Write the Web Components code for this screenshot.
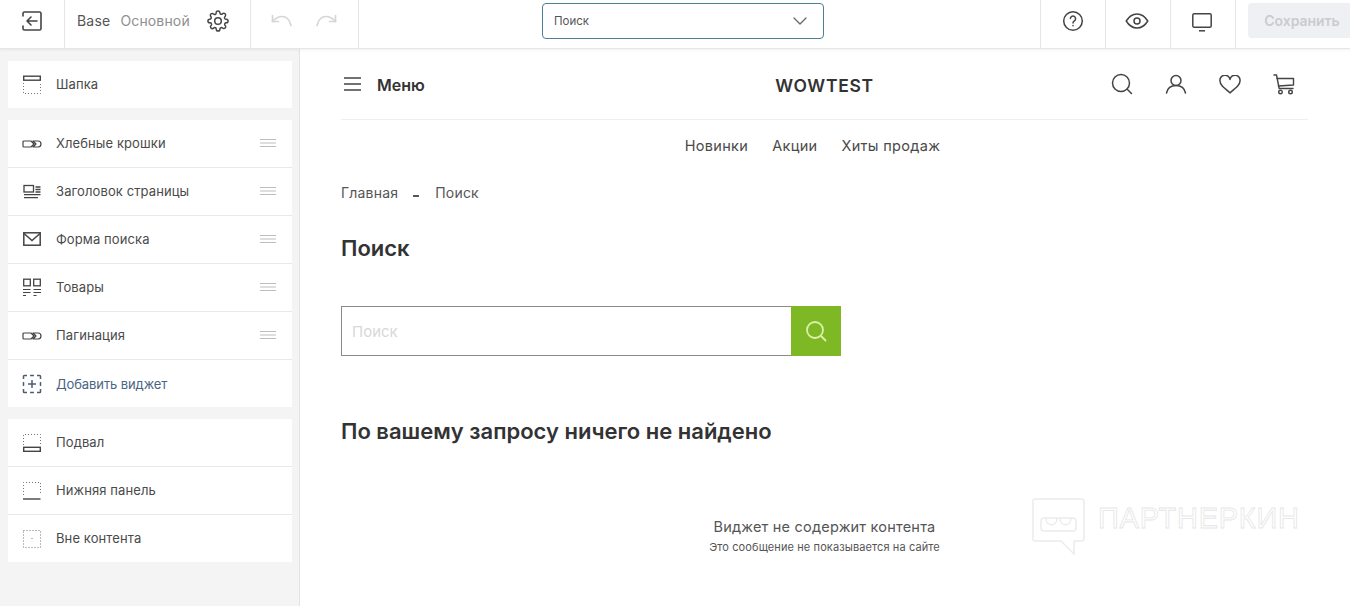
<!DOCTYPE html>
<html lang="ru"><head><meta charset="utf-8"><title>Редактор</title>
<style>
html,body{margin:0;height:606px;overflow:hidden;background:#fff;font-family:Inter,"Noto Sans",sans-serif;color:#333}
</style></head><body>
<editor-app></editor-app>
<script>
const I={
back:'<svg width="22" height="22" viewBox="0 0 22 22" fill="none" stroke="#444" stroke-width="1.6" stroke-linecap="round" stroke-linejoin="round"><path d="M2 6V3.5A1.5 1.5 0 0 1 3.5 2h15A1.5 1.5 0 0 1 20 3.5v15a1.500 1.500 0 0 1-1.500 1.500h-15A1.500 1.500 0 0 1 2 18.500V16"/><path d="M16 11H6M10 7l-4 4 4 4"/></svg>',
gear:'<svg width="22" height="22" viewBox="0 0 24 24" fill="none" stroke="#444" stroke-width="1.6" stroke-linejoin="round"><circle cx="12" cy="12" r="3.6"/><path d="M19.4 15a1.650 1.650 0 0 0 .33 1.820l.06.06a2 2 0 1 1-2.830 2.830l-.06-.06a1.650 1.650 0 0 0-2.800 1.170V21a2 2 0 1 1-4 0v-.09A1.650 1.650 0 0 0 7.300 19.700l-.06.06a2 2 0 1 1-2.830-2.830l.06-.06A1.650 1.650 0 0 0 3.300 14H3a2 2 0 1 1 0-4h.09A1.650 1.650 0 0 0 4.300 7.300l-.06-.06a2 2 0 1 1 2.830-2.830l.06.06A1.650 1.650 0 0 0 10 3.300V3a2 2 0 1 1 4 0v.09a1.650 1.650 0 0 0 2.800 1.170l.06-.06a2 2 0 1 1 2.830 2.830l-.06.06A1.650 1.650 0 0 0 20.700 10H21a2 2 0 1 1 0 4h-.09a1.650 1.650 0 0 0-1.510 1z"/></svg>',
undo:'<svg width="22" height="14" viewBox="0 0 22 14" fill="none" stroke="#d6d6d6" stroke-width="1.700" stroke-linecap="round" stroke-linejoin="round"><path d="M1.500 1.500v6h6"/><path d="M1.500 7.500C5 3.500 8 2.500 11 2.500c4 0 7.500 3 9 9"/></svg>',
redo:'<svg width="22" height="14" viewBox="0 0 22 14" fill="none" stroke="#d6d6d6" stroke-width="1.700" stroke-linecap="round" stroke-linejoin="round"><path d="M20.500 1.500v6h-6"/><path d="M20.500 7.500C17 3.500 14 2.500 11 2.500c-4 0-7.500 3-9 9"/></svg>',
chev:'<svg width="14" height="8" viewBox="0 0 14 8" fill="none" stroke="#666" stroke-width="1.300" stroke-linecap="round" stroke-linejoin="round"><path d="M1 1l6 6 6-6"/></svg>',
help:'<svg width="22" height="22" viewBox="0 0 22 22" fill="none" stroke="#444" stroke-width="1.500" stroke-linecap="round"><circle cx="11" cy="11" r="9.300"/><path d="M8.400 8.600a2.600 2.600 0 1 1 4 2.200c-.9.600-1.400 1-1.400 2.100"/><path d="M11 15.600v.2"/></svg>',
eye:'<svg width="24" height="16" viewBox="0 0 24 16" fill="none" stroke="#444" stroke-width="1.500" style="margin-right:2px"><path d="M1.200 8C4 3.500 8 1 12 1s8 2.500 10.800 7C20 12.500 16 15 12 15S4 12.500 1.200 8z" stroke-linejoin="round"/><circle cx="12" cy="8" r="3"/></svg>',
mon:'<svg width="20" height="19" viewBox="0 0 20 19" fill="none" stroke="#444" stroke-width="1.500" style="margin:2px 2px 0 0"><rect x=".8" y=".8" width="18.400" height="13.400" rx="1.500"/><path d="M7 17.800h6"/></svg>',
drag:'<svg width="16" height="9" viewBox="0 0 16 9" fill="none" stroke="#bdbdbd"><path d="M0 .5h16M0 4h16M0 7.500h16"/></svg>',
search:'<svg width="22" height="22" viewBox="0 0 22 22" fill="none" stroke="#444" stroke-width="1.500" stroke-linecap="round"><circle cx="10" cy="10" r="8.500"/><path d="M16.200 16.200l4.300 4.300"/></svg>',
user:'<svg width="22" height="20" viewBox="0 0 22 20" fill="none" stroke="#444" stroke-width="1.500" stroke-linecap="round"><circle cx="11" cy="6.500" r="5"/><path d="M1.500 19c.8-4 4-7.500 9.500-7.500s8.700 3.500 9.500 7.500"/></svg>',
heart:'<svg width="22" height="19" viewBox="0 0 22 19" fill="none" stroke="#444" stroke-width="1.500" stroke-linejoin="round"><path d="M11 17.800C5 13 1 10 1 6a4.800 4.800 0 0 1 10-1.500A4.800 4.800 0 0 1 21 6c0 4-4 7-10 11.800z"/></svg>',
cart:'<svg width="22" height="21" viewBox="0 0 22 21" fill="none" stroke="#444" stroke-width="1.400" stroke-linecap="round" stroke-linejoin="round"><path d="M1 1h2.500l2.700 13.500H20"/><path d="M4 4.500h16.500v6.500L5.400 12"/><circle cx="7.500" cy="18" r="1.800"/><circle cx="17.500" cy="18" r="1.800"/></svg>',
bigsearch:'<svg width="22" height="22" viewBox="0 0 22 22" fill="none" stroke="#d9f2a8" stroke-width="1.800" stroke-linecap="round"><circle cx="10" cy="10" r="8"/><path d="M16 16l4.500 4.500"/></svg>',
header:'<rect x=".7" y=".2" width="16.600" height="4" fill="none" stroke="#444" stroke-width="1.400"/><path d="M.5 7v10.500h17V7" fill="none" stroke="#777" stroke-dasharray="1 2"/>',
crumbs:'<path d="M8 6H1a1 1 0 0 0-1 1v4a1 1 0 0 0 1 1h7l3-3zM10 6h5a3 3 0 0 1 0 6h-5l3-3z" fill="none" stroke="#444" stroke-width="1.200" stroke-linejoin="round"/>',
title:'<rect x="1" y="2.500" width="9.500" height="6.500" fill="none" stroke="#444" stroke-width="1.300"/><path d="M12.500 4h5M12.500 6.500h5M12.500 9h5M1 11.700h16.500M1 14.700h14" stroke="#444" stroke-width="1.300"/>',
mail:'<rect x=".8" y="1.800" width="16.400" height="12.400" fill="none" stroke="#444" stroke-width="1.500"/><path d="M1 2.500l8 7 8-7" fill="none" stroke="#444" stroke-width="1.500"/>',
goods:'<rect x=".7" y=".2" width="6.600" height="6.600" fill="none" stroke="#444" stroke-width="1.300"/><rect x="10.700" y=".2" width="6.600" height="6.600" fill="none" stroke="#444" stroke-width="1.300"/><path d="M0 10.500h7.500M10.500 10.500h7.500M0 13.500h7.500M10.500 13.500h7.500M0 16.500h3M10.500 16.500h3" stroke="#444" stroke-width="1.200"/>',
add:'<path d="M.5 4V1.300A.8.800 0 0 1 1.300.5H4M7 .5h4M14 .5h2.700a.8.800 0 0 1 .8.800V4M17.500 7v4M17.500 14v2.700a.8.800 0 0 1-.8.800H14M11 17.500H7M4 17.500H1.300a.8.800 0 0 1-.8-.800V14M.5 11V7" fill="none" stroke="#4a5f78" stroke-width="1.500"/><path d="M9 5v8M5 9h8" stroke="#4a5f78" stroke-width="1.500"/>',
footer:'<path d="M.5 11V.5h17V11" fill="none" stroke="#777" stroke-dasharray="1 2"/><rect x=".7" y="13.300" width="16.600" height="4" fill="none" stroke="#444" stroke-width="1.400"/>',
bottom:'<path d="M.5 13V.5h17V13" fill="none" stroke="#777" stroke-dasharray="1 2"/><path d="M0 17h17.500" stroke="#444" stroke-width="1.400"/>',
outside:'<rect x=".5" y=".5" width="17" height="17" fill="none" stroke="#777" stroke-dasharray="1 2"/><path d="M8.500 8.500h1" stroke="#777"/>'
};
function def(name,css,html){
  customElements.define(name,class extends HTMLElement{
    constructor(){super();this.attachShadow({mode:'open'}).innerHTML='<style>'+css+'</style>'+(typeof html==='function'?html(this):html)}
    connectedCallback(){if(typeof html==='function'&&!this._d){this._d=1;this.shadowRoot.innerHTML='<style>'+css+'</style>'+html(this)}}
  });
}
def('top-bar',`
:host{display:flex;height:48px;background:#fff;border-bottom:1px solid #e6e6e6;box-shadow:0 1px 3px rgba(0,0,0,.06);position:relative;z-index:2;box-sizing:content-box;align-items:stretch;font-size:14px}
.c{display:flex;align-items:center;justify-content:center;border-right:1px solid #e5e5e5;box-sizing:border-box;padding-bottom:6px}
.back{width:65px}
.base{width:186px;justify-content:flex-start;padding-left:12px}
.base b{font-weight:400;color:#555;letter-spacing:.2px;margin-bottom:1px}
.base i{font-style:normal;color:#8f8f8f;margin:0 0 1px 10px;letter-spacing:.15px}
.base svg{margin-left:17px}
.hist{width:108px;gap:22px;padding-right:1px}
.mid{flex:1;display:flex;align-items:center;justify-content:center;padding-right:33px;padding-bottom:6px}
.sel{width:282px;height:36px;border:1px solid #4f7f96;border-radius:4px;box-sizing:border-box;display:flex;align-items:center;justify-content:space-between;padding:0 16px 0 11px;font-size:11.500px;color:#555}
.r{width:65px}
.r.f{border-left:1px solid #e5e5e5;width:66px}
.sv{width:114px;padding-left:12px;box-sizing:border-box;padding-top:3px}
.sv div{height:35px;background:#eff0f3;border-radius:4px 0 0 4px;color:#c9cbd1;font-weight:600;font-size:14px;display:flex;align-items:center;justify-content:center;padding-left:6px;letter-spacing:-.05px}
`,`<div class="c back">${I.back}</div>
<div class="c base"><b>Base</b><i>Основной</i>${I.gear}</div>
<div class="c hist">${I.undo}${I.redo}</div>
<div class="mid"><div class="sel"><span>Поиск</span>${I.chev}</div></div>
<div class="c r f">${I.help}</div><div class="c r">${I.eye}</div><div class="c r">${I.mon}</div>
<div class="sv"><div>Сохранить</div></div>`);
def('side-row',`
:host{display:flex;align-items:center;height:47px;padding:0 16px 0 14px;font-size:13px;color:#4a4a4a;letter-spacing:.1px;box-sizing:content-box}
:host([sep]){border-bottom:1px solid #e8e8e8}
:host([add]){color:#4a6583;letter-spacing:-.1px}
.i{width:20px;height:20px;margin-right:14px;flex:none;display:block}
.t{flex:1;padding-bottom:2px}
:host([add]) .t{padding-bottom:0}
.d{display:flex}
`,h=>`<svg class="i" viewBox="-1 -1 20 20">${I[h.getAttribute('icon')]||''}</svg><span class="t"><slot></slot></span>${h.hasAttribute('drag')?`<span class="d">${I.drag}</span>`:''}`);
def('side-card',`:host{display:block;background:#fff;margin-bottom:12px}`,`<slot></slot>`);
def('side-bar',`:host{display:block;width:300px;flex:none;box-sizing:border-box;background:#f4f4f4;border-right:1px solid #e3e3e3;padding:12px 7px 0 8px}`,`<slot></slot>`);
def('site-header',`
:host{display:block;color:#333}
.top{display:grid;grid-template-columns:1fr auto 1fr;align-items:center;height:70px;border-bottom:1px solid #efefef}
.m{display:flex;align-items:center;gap:16px;font-weight:600;font-size:16px;padding-left:3px;padding-top:2px}
.m svg{display:block;margin-top:-2px}
.b{font-weight:600;font-size:17.500px;letter-spacing:.7px;padding-top:2px}
.ic{display:flex;justify-content:flex-end;align-items:center;gap:32px;padding-right:13px}
.ic span{display:flex;width:22px;justify-content:center}
nav{display:flex;justify-content:center;gap:24px;font-size:14.500px;letter-spacing:.32px;height:50px;align-items:center;color:#4a4a4a;padding-right:24px}
`,`<div class="top"><div class="m"><svg width="17" height="14" viewBox="0 0 17 14" stroke="#444" stroke-width="1.300"><path d="M0 1h17M0 7h17M0 13h17"/></svg>Меню</div><div class="b">WOWTEST</div>
<div class="ic"><span>${I.search}</span><span>${I.user}</span><span>${I.heart}</span><span>${I.cart}</span></div></div>
<nav><span>Новинки</span><span>Акции</span><span>Хиты продаж</span></nav>`);
def('search-form',`
:host{display:flex;width:500px;height:50px;box-sizing:border-box;margin-top:43px}
.f{flex:1;border:1px solid #8a8a8a;border-right:0;display:flex;align-items:center;padding-left:10px;color:#d8d8d8;font-size:15px}
.b{width:50px;background:#7fb825;display:flex;align-items:center;justify-content:center}
`,`<div class="f">Поиск</div><div class="b">${I.bigsearch}</div>`);
def('page-content',`
:host{display:block;flex:1;padding:0 42px 0 41px;background:#fff;position:relative;min-width:0}
.bc{display:flex;font-size:14px;color:#555;margin-top:7px;height:30px;align-items:center;letter-spacing:.2px}
.bc u{text-decoration:none;width:6px;height:2px;background:#555;margin:7px 16px 0 15px;display:block}
h1{font-size:22px;font-weight:600;margin:26px 0 0;line-height:30px;color:#333}
h2{font-size:22px;font-weight:600;margin:60px 0 0;line-height:30px;color:#333}
.em{text-align:center;margin-top:71px}
.em p{margin:0;font-size:14.500px;line-height:20px;color:#555;letter-spacing:.2px}
.em small{display:block;font-size:11px;line-height:14px;margin-top:3px;color:#555;letter-spacing:.1px}
.wm{position:absolute;left:732px;top:449px;display:flex;align-items:flex-start;gap:13px;pointer-events:none}
.wm span{font-size:29px;font-weight:400;letter-spacing:.75px;color:#fff;-webkit-text-stroke:.8px #e6e6e6;line-height:30px;margin-top:5px;font-family:"Liberation Sans",sans-serif}
`,`<site-header></site-header>
<div class="bc"><span>Главная</span><u></u><span>Поиск</span></div>
<h1>Поиск</h1>
<search-form></search-form>
<h2>По вашему запросу ничего не найдено</h2>
<div class="em"><p>Виджет не содержит контента</p><small>Это сообщение не показывается на сайте</small></div>
<div class="wm"><svg width="53" height="58" viewBox="0 0 53 58" fill="none" stroke="#ececec" stroke-width="1.500"><path d="M3 1h47a2 2 0 0 1 2 2v38a2 2 0 0 1-2 2H42v13L29 43H3a2 2 0 0 1-2-2V3a2 2 0 0 1 2-2z"/><rect x="9" y="20" width="35" height="13" rx="3"/><path d="M14 20c0 9 11 9 11 0M28 20c0 9 11 9 11 0"/></svg><span>ПАРТНЕРКИН</span></div>`);
def('editor-app',`:host{display:flex;flex-direction:column;height:606px;overflow:hidden}
.b{display:flex;flex:1;min-height:0}`,`<top-bar></top-bar><div class="b"><side-bar>
<side-card><side-row icon="header">Шапка</side-row></side-card>
<side-card><side-row icon="crumbs" sep drag>Хлебные крошки</side-row><side-row icon="title" sep drag>Заголовок страницы</side-row><side-row icon="mail" sep drag>Форма поиска</side-row><side-row icon="goods" sep drag>Товары</side-row><side-row icon="crumbs" sep drag>Пагинация</side-row><side-row icon="add" add>Добавить виджет</side-row></side-card>
<side-card><side-row icon="footer" sep>Подвал</side-row><side-row icon="bottom" sep>Нижняя панель</side-row><side-row icon="outside">Вне контента</side-row></side-card>
</side-bar><page-content></page-content></div>`);
</script>
</body></html>
